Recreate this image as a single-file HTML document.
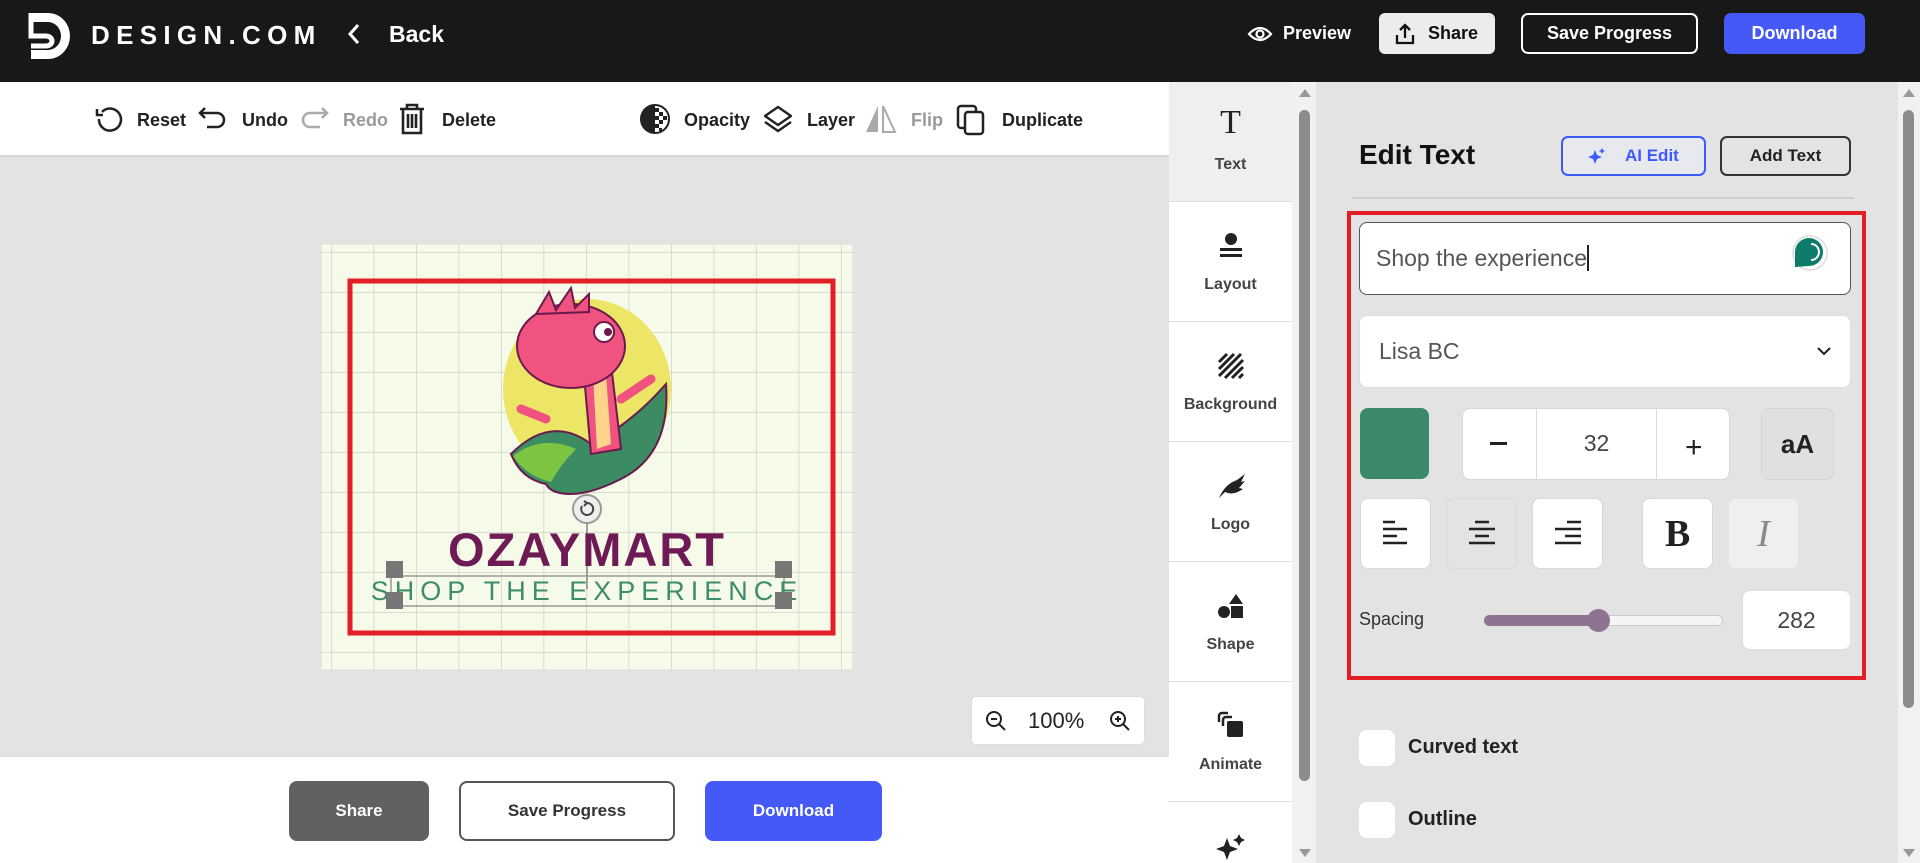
<!DOCTYPE html>
<html style="width:1920px;height:863px;overflow:hidden"><head><meta charset="utf-8"><style>
*{box-sizing:border-box;margin:0;padding:0}
html,body{width:1920px;height:863px;overflow:hidden}
body{font-family:"Liberation Sans",sans-serif;background:#e3e3e3}
#w{position:relative;width:1920px;height:863px;overflow:hidden;background:#e3e3e3}
.a{position:absolute}
.b{font-weight:bold}
.tb{position:absolute;top:110px;font-size:18px;font-weight:bold;color:#222}
.side{position:absolute;left:1169px;width:123px;height:120px;background:#fff;border-bottom:1px solid #ddd;text-align:center}
.side span{position:absolute;left:0;right:0;font-size:16px;font-weight:bold;color:#444}
.btn{position:absolute;background:#fff;border-radius:8px;border:1px solid #d8d8d8}
</style></head><body><div id="w">
<div class="a" style="left:0;top:0;width:1920px;height:82px;background:#181818"></div>
<svg class="a" style="left:28px;top:10px" width="48" height="52" viewBox="0 0 48 52"><path d="M3 3H20A22 23 0 0 1 20 49H3V40H20A13 14 0 0 0 20 12H3Z" fill="#fff"/><path d="M3 3V26H18A6 5 0 0 1 18 36H3" fill="none" stroke="#fff" stroke-width="5"/></svg>
<div class="a b" style="left:91px;top:20px;color:#fff;font-size:26px;letter-spacing:6.3px">DESIGN.COM</div>
<svg class="a" style="left:346px;top:22px" width="16" height="24"><path d="M12 3L4 12L12 21" stroke="#fff" stroke-width="3" fill="none"/></svg>
<div class="a b" style="left:389px;top:21px;color:#fff;font-size:23px">Back</div>
<svg class="a" style="left:1247px;top:24px" width="26" height="20" viewBox="0 0 26 20"><path d="M2 10Q13 -2 24 10Q13 22 2 10Z" stroke="#fff" stroke-width="2.2" fill="none"/><circle cx="13" cy="10" r="3.5" stroke="#fff" stroke-width="2.2" fill="none"/></svg>
<div class="a b" style="left:1283px;top:23px;color:#fff;font-size:18px">Preview</div>
<div class="a" style="left:1379px;top:13px;width:116px;height:41px;background:#ececec;border-radius:6px"></div>
<svg class="a" style="left:1394px;top:22px" width="22" height="24"><path d="M11 16V3M6 8L11 3L16 8M3 13V21H19V13" stroke="#111" stroke-width="2.3" fill="none"/></svg>
<div class="a b" style="left:1428px;top:23px;color:#111;font-size:18px">Share</div>
<div class="a b" style="left:1521px;top:13px;width:177px;height:41px;border:2px solid #fff;border-radius:7px;color:#fff;font-size:18px;text-align:center;line-height:37px">Save Progress</div>
<div class="a b" style="left:1724px;top:13px;width:141px;height:41px;background:#4459f6;border-radius:7px;color:#fff;font-size:18px;text-align:center;line-height:41px">Download</div>
<div class="a" style="left:0;top:82px;width:1169px;height:75px;background:#fff;border-bottom:2px solid #d6d6d6"></div>
<svg class="a" style="left:94px;top:104px" width="30" height="30" viewBox="0 0 30 30"><path d="M8 8A11 11 0 1 1 5 15" stroke="#222" stroke-width="2.5" fill="none"/><path d="M3 5V11H9" stroke="#222" stroke-width="2.5" fill="none"/></svg>
<div class="tb" style="left:137px">Reset</div>
<svg class="a" style="left:197px;top:104px" width="32" height="30"><path d="M8 4L3 9L8 14M3 9H20A7 7 0 0 1 20 23H10" stroke="#222" stroke-width="2.5" fill="none"/></svg>
<div class="tb" style="left:242px">Undo</div>
<svg class="a" style="left:298px;top:104px" width="32" height="30"><path d="M24 4L29 9L24 14M29 9H12A7 7 0 0 0 12 23H22" stroke="#aaa" stroke-width="2.5" fill="none"/></svg>
<div class="tb" style="left:343px;color:#9a9a9a">Redo</div>
<svg class="a" style="left:397px;top:102px" width="30" height="34"><path d="M3 7H27M10 7V3H20V7M6 7V31H24V7M11 12V26M15 12V26M19 12V26" stroke="#222" stroke-width="2.6" fill="none"/></svg>
<div class="tb" style="left:442px">Delete</div>
<svg class="a" style="left:639px;top:103px" width="32" height="32"><circle cx="16" cy="16" r="14" fill="none" stroke="#222" stroke-width="2"/><path d="M16 2A14 14 0 0 0 16 30Z" fill="#222"/><g fill="#222"><rect x="16" y="5" width="4" height="4"/><rect x="20" y="9" width="4" height="4"/><rect x="16" y="13" width="4" height="4"/><rect x="24" y="13" width="4" height="4"/><rect x="20" y="17" width="4" height="4"/><rect x="16" y="21" width="4" height="4"/><rect x="20" y="25" width="3" height="3"/></g></svg>
<div class="tb" style="left:684px">Opacity</div>
<svg class="a" style="left:763px;top:104px" width="30" height="30"><path d="M15 3L28 12L15 21L2 12Z" stroke="#222" stroke-width="2.4" fill="none" stroke-linejoin="round"/><path d="M2 18L15 27L28 18" stroke="#222" stroke-width="2.4" fill="none"/></svg>
<div class="tb" style="left:807px">Layer</div>
<svg class="a" style="left:863px;top:104px" width="36" height="30"><path d="M15 2L3 28H15Z" fill="#aaa"/><path d="M20 2V28H32Z" fill="none" stroke="#aaa" stroke-width="2"/></svg>
<div class="tb" style="left:911px;color:#9a9a9a">Flip</div>
<svg class="a" style="left:955px;top:103px" width="32" height="34"><rect x="3" y="3" width="18" height="22" rx="3" fill="none" stroke="#222" stroke-width="2.5"/><rect x="10" y="9" width="18" height="22" rx="3" fill="#fff" stroke="#222" stroke-width="2.5"/></svg>
<div class="tb" style="left:1002px">Duplicate</div>
<svg class="a" style="left:321px;top:244px" width="532" height="426">
<defs><pattern id="g" width="42.5" height="40" patternUnits="userSpaceOnUse" x="10" y="8"><path d="M0 0V40M0 0H42.5" stroke="#cfd3c6" stroke-width="1.5" fill="none"/></pattern></defs>
<rect width="532" height="426" fill="#f6fae9" stroke="#d8d8d8"/>
<rect width="532" height="426" fill="url(#g)"/>
<rect x="29" y="37" width="483" height="352" fill="none" stroke="#e31e24" stroke-width="5"/>
<ellipse cx="266" cy="145" rx="84" ry="90" fill="#ece566"/>
<path d="M190 210Q230 170 270 200Q310 180 345 140Q350 210 300 235Q270 250 250 250Q230 250 225 240Q200 235 190 210Z" fill="#3b8c63" stroke="#6a1a4c" stroke-width="2"/>
<path d="M192 212Q220 190 255 205Q240 220 230 238Q205 232 192 212Z" fill="#7cc442"/>
<path d="M262 120L290 120L300 205L270 210Z" fill="#f0537f" stroke="#6a1a4c" stroke-width="2"/>
<path d="M272 130L285 130L290 200L276 205Z" fill="#fdd48a"/>
<ellipse cx="250" cy="102" rx="54" ry="42" fill="#f0537f" stroke="#6a1a4c" stroke-width="2"/>
<path d="M215 70L228 48L235 66L250 44L254 64L268 50L268 68Z" fill="#f0537f" stroke="#6a1a4c" stroke-width="2"/>
<circle cx="283" cy="88" r="10" fill="#fff" stroke="#6a1a4c" stroke-width="2"/><circle cx="287" cy="88" r="4" fill="#6a1a4c"/>
<path d="M300 155L330 135M200 165L225 175" stroke="#f0537f" stroke-width="9" stroke-linecap="round"/>
<line x1="266" y1="265" x2="266" y2="345" stroke="#888" stroke-width="1.5"/>
<circle cx="266" cy="265" r="14" fill="#eee" stroke="#999" stroke-width="2"/>
<path d="M261 262A6 6 0 1 0 266 259M263 257L266 259L263 262" stroke="#444" stroke-width="2" fill="none"/>
<text x="266" y="322" text-anchor="middle" font-family="Liberation Sans" font-weight="bold" font-size="47" fill="#6e1a55" letter-spacing="2">OZAYMART</text>
<rect x="70" y="332" width="393" height="30" fill="none" stroke="#999" stroke-width="1.5"/>
<text x="266" y="356" text-anchor="middle" font-family="Liberation Sans" font-size="27" fill="#3f8c6c" letter-spacing="6">SHOP THE EXPERIENCE</text>
<g fill="#777"><rect x="65" y="317" width="17" height="17"/><rect x="65" y="348" width="17" height="17"/><rect x="454" y="317" width="17" height="17"/><rect x="454" y="348" width="17" height="17"/></g>
</svg>
<div class="a" style="left:971px;top:696px;width:174px;height:49px;background:#fff;border-radius:5px;border:1px solid #ddd"></div>
<svg class="a" style="left:984px;top:709px" width="24" height="24"><circle cx="10" cy="10" r="7" stroke="#222" stroke-width="2" fill="none"/><path d="M15 15L21 21M7 10H13" stroke="#222" stroke-width="2"/></svg>
<div class="a" style="left:1028px;top:708px;font-size:22px;color:#222">100%</div>
<svg class="a" style="left:1108px;top:709px" width="24" height="24"><circle cx="10" cy="10" r="7" stroke="#222" stroke-width="2" fill="none"/><path d="M15 15L21 21M7 10H13M10 7V13" stroke="#222" stroke-width="2"/></svg>
<div class="a" style="left:0;top:757px;width:1169px;height:106px;background:#fff"></div>
<div class="a b" style="left:289px;top:781px;width:140px;height:60px;background:#616161;border-radius:8px;color:#fff;font-size:17px;text-align:center;line-height:60px">Share</div>
<div class="a b" style="left:459px;top:781px;width:216px;height:60px;border:2px solid #555;border-radius:8px;color:#333;font-size:17px;text-align:center;line-height:56px;background:#fff">Save Progress</div>
<div class="a b" style="left:705px;top:781px;width:177px;height:60px;background:#4459f6;border-radius:8px;color:#fff;font-size:17px;text-align:center;line-height:60px">Download</div>
<div class="a" style="left:1169px;top:82px;width:123px;height:781px;background:#fff"></div>
<div class="side" style="top:82px;background:#efefef"><div class="a" style="left:0;right:0;top:22px;font-family:'Liberation Serif',serif;font-size:34px;color:#222">T</div><span style="top:74px">Text</span></div>
<div class="side" style="top:202px"><svg class="a" style="left:48px;top:30px" width="28" height="28"><circle cx="14" cy="7" r="6" fill="#222"/><rect x="3" y="16" width="22" height="3" fill="#222"/><rect x="3" y="22" width="22" height="3" fill="#222"/></svg><span style="top:74px">Layout</span></div>
<div class="side" style="top:322px"><svg class="a" style="left:48px;top:30px" width="28" height="28"><path d="M2 10L10 2M2 17L17 2M2 24L24 2M8 26L26 8M15 26L26 15M22 26L26 22" stroke="#222" stroke-width="3"/></svg><span style="top:74px">Background</span></div>
<div class="side" style="top:442px"><svg class="a" style="left:48px;top:30px" width="30" height="28"><path d="M2 26Q8 12 20 8L28 2L24 10L28 9L22 16L26 17Q16 24 8 20Z" fill="#222"/></svg><span style="top:74px">Logo</span></div>
<div class="side" style="top:562px"><svg class="a" style="left:47px;top:30px" width="30" height="30"><path d="M20 2L27 12H13Z" fill="#222"/><circle cx="8" cy="20" r="6" fill="#222"/><rect x="15" y="14" width="12" height="12" fill="#222"/></svg><span style="top:74px">Shape</span></div>
<div class="side" style="top:682px"><svg class="a" style="left:47px;top:28px" width="30" height="30"><path d="M3 12V6A3 3 0 0 1 6 3H12M7 16V10A3 3 0 0 1 10 7H16" stroke="#222" stroke-width="2.5" fill="none"/><rect x="11" y="11" width="16" height="16" rx="2" fill="#222"/></svg><span style="top:74px">Animate</span></div>
<div class="side" style="top:802px;height:61px;border:none"><svg class="a" style="left:47px;top:30px" width="30" height="30"><path d="M11 6L14 14L22 17L14 20L11 28L8 20L0 17L8 14Z M23 2L25 6L29 8L25 10L23 14L21 10L17 8L21 6Z" fill="#222"/></svg></div>
<div class="a" style="left:1292px;top:82px;width:24px;height:781px;background:#f1f1f1"></div>
<div class="a" style="left:1299px;top:110px;width:11px;height:671px;background:#8c8c8c;border-radius:6px"></div>
<svg class="a" style="left:1298px;top:88px" width="14" height="10"><path d="M7 1L13 9H1Z" fill="#999"/></svg>
<svg class="a" style="left:1298px;top:848px" width="14" height="10"><path d="M7 9L13 1H1Z" fill="#999"/></svg>
<div class="a" style="left:1898px;top:82px;width:22px;height:781px;background:#f1f1f1"></div>
<div class="a" style="left:1903px;top:110px;width:11px;height:598px;background:#8c8c8c;border-radius:6px"></div>
<svg class="a" style="left:1902px;top:88px" width="14" height="10"><path d="M7 1L13 9H1Z" fill="#999"/></svg>
<svg class="a" style="left:1902px;top:848px" width="14" height="10"><path d="M7 9L13 1H1Z" fill="#999"/></svg>
<div class="a b" style="left:1359px;top:139px;font-size:28px;color:#111">Edit Text</div>
<div class="a b" style="left:1561px;top:136px;width:145px;height:40px;border:2px solid #3d5afe;border-radius:7px;color:#3d5afe;font-size:17px;line-height:36px;padding-left:62px;background:#e8e8ef">AI Edit</div>
<svg class="a" style="left:1587px;top:147px" width="20" height="18"><path d="M8 3L10 8L15 10L10 12L8 17L6 12L1 10L6 8Z M15 1L16 3L18 4L16 5L15 7L14 5L12 4L14 3Z" fill="#3d5afe"/></svg>
<div class="a b" style="left:1720px;top:136px;width:131px;height:40px;border:2px solid #333;border-radius:7px;color:#222;font-size:17px;line-height:36px;text-align:center">Add Text</div>
<div class="a" style="left:1352px;top:197px;width:502px;height:2px;background:#cfcfcf"></div>
<div class="a" style="left:1347px;top:211px;width:519px;height:469px;border:4px solid #e31e24"></div>
<div class="a" style="left:1359px;top:222px;width:492px;height:73px;background:#fff;border:1px solid #555;border-radius:8px"></div>
<div class="a" style="left:1376px;top:245px;font-size:23px;color:#555">Shop the experience<span style="display:inline-block;width:1.5px;height:26px;background:#222;vertical-align:-5px"></span></div>
<svg class="a" style="left:1791px;top:234px" width="38" height="38"><circle cx="19" cy="19" r="17" fill="#fff" stroke="#ddd" stroke-width="1.5"/><path d="M4 33V18A14 14 0 1 1 18 32Z" fill="#0e7c6b"/><path d="M20 10A8 8 0 0 1 20 26" stroke="#fff" stroke-width="2" fill="none"/></svg>
<div class="a" style="left:1359px;top:315px;width:492px;height:73px;background:#fff;border-radius:8px;border:1px solid #ddd"></div>
<div class="a" style="left:1379px;top:338px;font-size:23px;color:#555">Lisa BC</div>
<svg class="a" style="left:1816px;top:345px" width="16" height="12"><path d="M2 3L8 9L14 3" stroke="#222" stroke-width="2" fill="none"/></svg>
<div class="a" style="left:1360px;top:408px;width:69px;height:71px;background:#3a8a6a;border-radius:8px"></div>
<div class="btn" style="left:1462px;top:408px;width:268px;height:72px"></div>
<div class="a" style="left:1536px;top:408px;width:1px;height:72px;background:#ddd"></div>
<div class="a" style="left:1656px;top:408px;width:1px;height:72px;background:#ddd"></div>
<div class="a" style="left:1490px;top:442px;width:17px;height:3px;background:#222"></div>
<div class="a" style="left:1537px;top:430px;width:119px;text-align:center;font-size:23px;color:#444">32</div>
<div class="a" style="left:1685px;top:433px;font-size:30px;color:#222;line-height:1">+</div>
<div class="a b" style="left:1761px;top:408px;width:73px;height:72px;background:#e0e0e0;border-radius:8px;border:1px solid #d4d4d4;text-align:center;line-height:70px;font-size:26px;color:#222">aA</div>
<div class="btn" style="left:1360px;top:498px;width:71px;height:71px"></div>
<div class="btn" style="left:1446px;top:498px;width:71px;height:71px;background:#e3e3e3"></div>
<div class="btn" style="left:1532px;top:498px;width:71px;height:71px"></div>
<div class="btn" style="left:1642px;top:498px;width:71px;height:71px"></div>
<div class="btn" style="left:1728px;top:498px;width:71px;height:71px;background:#efefef;border-color:#e4e4e4"></div>
<svg class="a" style="left:1381px;top:520px" width="30" height="26"><path d="M2 2H14M2 9H26M2 16H16M2 23H26" stroke="#222" stroke-width="2.5"/></svg>
<svg class="a" style="left:1467px;top:520px" width="30" height="26"><path d="M8 2H22M2 9H28M8 16H22M2 23H28" stroke="#222" stroke-width="2.5"/></svg>
<svg class="a" style="left:1553px;top:520px" width="30" height="26"><path d="M14 2H28M2 9H28M12 16H28M2 23H28" stroke="#222" stroke-width="2.5"/></svg>
<div class="a b" style="left:1642px;top:512px;width:71px;text-align:center;font-family:'Liberation Serif',serif;font-size:38px;color:#222">B</div>
<div class="a" style="left:1728px;top:512px;width:71px;text-align:center;font-family:'Liberation Serif',serif;font-style:italic;font-size:38px;color:#888">I</div>
<div class="a" style="left:1359px;top:609px;font-size:18px;color:#333">Spacing</div>
<div class="a" style="left:1484px;top:615px;width:239px;height:11px;background:#f4f4f4;border:1px solid #ccc;border-radius:6px"></div>
<div class="a" style="left:1484px;top:615px;width:116px;height:11px;background:#8e7490;border-radius:6px"></div>
<div class="a" style="left:1587px;top:609px;width:23px;height:23px;background:#8e7490;border-radius:50%"></div>
<div class="a" style="left:1742px;top:590px;width:109px;height:60px;background:#fff;border-radius:8px;border:1px solid #ddd;text-align:center;line-height:58px;font-size:23px;color:#444">282</div>
<div class="a" style="left:1359px;top:730px;width:36px;height:36px;background:#fff;border-radius:8px"></div>
<div class="a b" style="left:1408px;top:736px;font-size:20px;color:#222">Curved text</div>
<div class="a" style="left:1359px;top:802px;width:36px;height:36px;background:#fff;border-radius:8px"></div>
<div class="a b" style="left:1408px;top:808px;font-size:20px;color:#222">Outline</div>
</div></body></html>
